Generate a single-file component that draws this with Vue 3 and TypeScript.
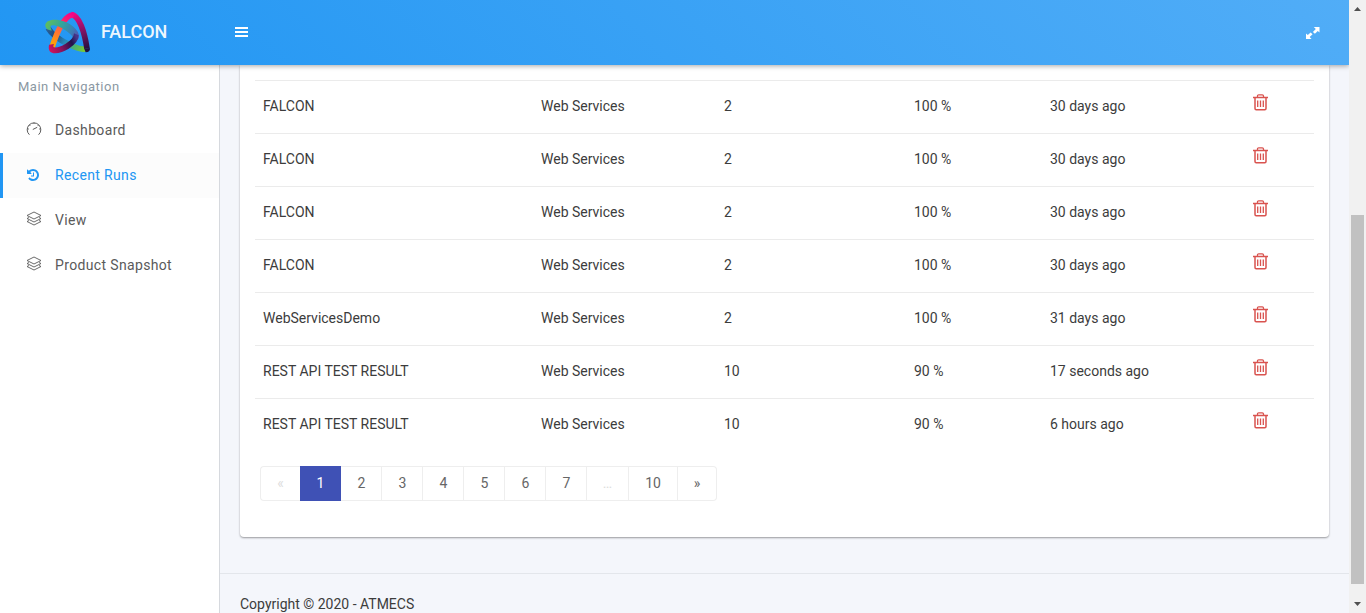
<script setup lang="ts">
interface Run {
  product: string
  type: string
  total: number
  rate: string
  when: string
}
interface Page {
  label: string
  kind?: 'active' | 'disabled'
  size: string
}

const falcon: Run = { product: 'FALCON', type: 'Web Services', total: 2, rate: '100 %', when: '30 days ago' }
const runs: Run[] = [
  { ...falcon },
  { ...falcon },
  { ...falcon },
  { ...falcon },
  { product: 'WebServicesDemo', type: 'Web Services', total: 2, rate: '100 %', when: '31 days ago' },
  { product: 'REST API TEST RESULT', type: 'Web Services', total: 10, rate: '90 %', when: '17 seconds ago' },
  { product: 'REST API TEST RESULT', type: 'Web Services', total: 10, rate: '90 %', when: '6 hours ago' },
]
const nav = [
  { label: 'Dashboard', icon: 'gauge' },
  { label: 'Recent Runs', icon: 'history', active: true },
  { label: 'View', icon: 'layers' },
  { label: 'Product Snapshot', icon: 'layers' },
]
const pages: Page[] = [
  { label: '«', kind: 'disabled', size: 'first' },
  { label: '1', kind: 'active', size: 'mid' },
  ...['2', '3', '4', '5', '6', '7'].map((label) => ({ label, size: 'mid' })),
  { label: '…', kind: 'disabled', size: 'dots' },
  { label: '10', size: 'wide' },
  { label: '»', size: 'last' },
]
</script>

<template>
  <div class="window">
    <div class="app">
      <header class="topbar">
        <div class="brand">
          <svg class="logo" viewBox="0 0 192 174" fill="none">
            <defs>
              <linearGradient id="warm" gradientUnits="userSpaceOnUse" x1="48" y1="125" x2="110" y2="28">
                <stop offset="0" stop-color="#ffa800" /><stop offset=".45" stop-color="#ff6a3d" />
                <stop offset=".75" stop-color="#fa1f6e" /><stop offset="1" stop-color="#f5008c" />
              </linearGradient>
              <linearGradient id="plum" gradientUnits="userSpaceOnUse" x1="115" y1="30" x2="155" y2="140">
                <stop offset="0" stop-color="#f0087f" /><stop offset=".5" stop-color="#7d1364" />
                <stop offset="1" stop-color="#1b1039" />
              </linearGradient>
              <linearGradient id="teal" gradientUnits="userSpaceOnUse" x1="32" y1="58" x2="128" y2="100">
                <stop offset="0" stop-color="#5fbd5d" /><stop offset=".4" stop-color="#32a69b" />
                <stop offset=".75" stop-color="#3a7fb5" /><stop offset="1" stop-color="#5750ac" />
              </linearGradient>
              <linearGradient id="leaf" gradientUnits="userSpaceOnUse" x1="34" y1="70" x2="148" y2="140">
                <stop offset="0" stop-color="#28639b" /><stop offset=".25" stop-color="#23487b" />
                <stop offset=".5" stop-color="#2689bc" /><stop offset=".72" stop-color="#45ae79" />
                <stop offset="1" stop-color="#7dcb2c" />
              </linearGradient>
              <linearGradient id="wine" gradientUnits="userSpaceOnUse" x1="42" y1="140" x2="124" y2="105">
                <stop offset="0" stop-color="#d3125c" /><stop offset=".4" stop-color="#85135d" />
                <stop offset=".78" stop-color="#21124b" /><stop offset="1" stop-color="#47368b" />
              </linearGradient>
            </defs>
            <path d="M36 72C48 92 73 109 98 121C121 133 138 138 151 134" stroke="url(#leaf)" stroke-width="17" />
            <path d="M106 32C130 34 146 86 153 134" stroke="url(#plum)" stroke-width="17" />
            <path d="M145 135L161.500 132Q164 144 149 145Z" fill="#20113d" />
            <path d="M48 130C62 86 86 30 113 33" stroke="url(#warm)" stroke-width="17" />
            <path d="M28 66C26 42 78 40 112 68Q132 84 128 102Q124 110 112 110Q114 98 98 86C74 66 48 60 44 66Q43 70 47 80Q30 78 28 66Z" fill="url(#teal)" />
            <path d="M39 122C32 160 74 148 98 134Q128 116 128 94L114 88Q114 104 88 120Q68 132 54 130Q50 129 54 120Z" fill="url(#wine)" />
          </svg>
          <span class="brand-name">FALCON</span>
        </div>
        <svg class="menu" viewBox="0 0 13 11"><path d="M0 0h13v2H0zM0 4h13v2H0zM0 8h13v2H0z" fill="#fff" /></svg>
        <svg class="expand" viewBox="0 0 14 12">
          <path d="M7.800 0H13.500V5.400L11.800 4L8.900 6.700L6.900 4.900L9.800 2.100ZM0 6.600L1.800 8L4.600 5.400L6.600 7.200L3.700 9.900L5.600 12H0Z" fill="#fff" />
        </svg>
      </header>

      <div class="body">
        <aside class="sidebar">
          <div class="nav-title">Main Navigation</div>
          <a v-for="item in nav" :key="item.label" class="nav-item" :class="{ active: item.active }">
            <svg v-if="item.icon === 'gauge'" class="nav-icon" viewBox="0 0 16 16" fill="none" stroke="currentColor">
              <path d="M3.400 13.700A6.800 6.800 0 1 1 12.600 13.700M6.800 8.500L11.200 6.300" />
              <path d="M8 1.500V3M1.500 8H3M13 8h1.500M3.400 4l1 1M12.600 4l-1 1" stroke-width=".8" />
            </svg>
            <svg v-else-if="item.icon === 'history'" class="nav-icon history" viewBox="0 128 1536 1536" fill="currentColor">
              <path d="M1536 896q0 156-61 298t-164 245-245 164-298 61q-172 0-327-72.500t-264-204.500q-7-10-6.500-22.500t8.500-20.500l137-138q10-9 25-9 16 2 23 12 73 95 179 147t225 52q104 0 198.500-40.500t163.500-109.500 109.500-163.500 40.500-198.500-40.500-198.500-109.500-163.500-163.500-109.500-198.500-40.500q-98 0-188 35.500t-160 101.500l137 138q31 30 14 69-17 40-59 40h-448q-26 0-45-19t-19-45v-448q0-42 40-59 39-17 69 14l130 129q107-101 244.500-156.500t284.500-55.500q156 0 298 61t245 164 164 245 61 298zm-640-288v448q0 14-9 23t-23 9h-320q-14 0-23-9t-9-23v-64q0-14 9-23t23-9h224v-352q0-14 9-23t23-9h64q14 0 23 9t9 23z" />
            </svg>
            <svg v-else class="nav-icon" viewBox="0 0 16 16" fill="none" stroke="currentColor" stroke-width=".9">
              <path d="M8 1L15 4.500L8 8L1 4.500ZM3 6.500L1 7.500L8 11L15 7.500L13 6.500M3 9.500L1 10.500L8 14L15 10.500L13 9.500" />
            </svg>
            <span>{{ item.label }}</span>
          </a>
        </aside>

        <main class="content">
          <section class="card">
            <table class="runs">
              <colgroup>
                <col class="c-product" /><col class="c-type" /><col class="c-total" />
                <col class="c-rate" /><col class="c-when" /><col />
              </colgroup>
              <tbody>
                <tr v-for="(run, i) in runs" :key="i">
                  <td>{{ run.product }}</td>
                  <td>{{ run.type }}</td>
                  <td>{{ run.total }}</td>
                  <td>{{ run.rate }}</td>
                  <td>{{ run.when }}</td>
                  <td>
                    <svg class="trash" viewBox="0 0 15 17" fill="none" stroke="#d9534f">
                      <path d="M0 3.500H15M4.500 3.500V2Q4.500 .8 5.700 .8H9.300Q10.500 .8 10.500 2V3.500" stroke-width="1.300" />
                      <path d="M2 3.500V14.500Q2 15.700 3.200 15.700H11.800Q13 15.700 13 14.500V3.500" stroke-width="1.500" />
                      <path d="M4.700 6.500V13M7.500 6.500V13M10.300 6.500V13" stroke-width="1.300" />
                    </svg>
                  </td>
                </tr>
              </tbody>
            </table>
            <nav class="pager">
              <a v-for="p in pages" :key="p.label" class="page" :class="[p.kind, p.size]">{{ p.label }}</a>
            </nav>
          </section>
          <footer class="footer">Copyright © 2020 - ATMECS</footer>
        </main>
      </div>
    </div>

    <div class="scrollbar">
      <svg class="arrow" viewBox="0 0 17 17"><path d="M5 11L8.500 7L12 11Z" fill="#505050" /></svg>
      <div class="thumb"></div>
      <svg class="arrow" viewBox="0 0 17 17"><path d="M5 6L8.500 10L12 6Z" fill="#505050" /></svg>
    </div>
  </div>
</template>

<style>
body {
  margin: 0;
  overflow: hidden;
}
</style>

<style scoped>
.window {
  display: flex;
  width: 1366px;
  height: 613px;
  overflow: hidden;
  font: 14px/20px Roboto, sans-serif;
  color: #3c3c3c;
  background: #f4f6fb;
}
.window * {
  box-sizing: border-box;
}
.app {
  flex: 1;
  display: flex;
  flex-direction: column;
  overflow: hidden;
}
.topbar {
  position: relative;
  z-index: 1;
  flex: none;
  display: flex;
  align-items: center;
  height: 65px;
  padding-right: 29px;
  background: linear-gradient(45deg, #2196f3, #51adf7);
  box-shadow: 0 1px 5px rgba(0, 0, 0, 0.35);
}
.brand {
  display: flex;
  align-items: center;
  width: 234px;
  padding-left: 36px;
}
.logo {
  width: 64px;
  height: 58px;
}
.brand-name {
  margin-left: 1px;
  padding-bottom: 2px;
  font-size: 18px;
  font-weight: 500;
  color: #fff;
  opacity: 0.92;
}
.menu {
  width: 13px;
  height: 11px;
  margin-left: 0.5px;
}
.expand {
  width: 14px;
  height: 12px;
  margin-left: auto;
}
.body {
  flex: 1;
  display: flex;
  min-height: 0;
}
.sidebar {
  flex: none;
  width: 220px;
  background: #fff;
  border-right: 1px solid #d6d9de;
}
.nav-title {
  height: 43px;
  padding: 12px 18px 0;
  font-size: 13px;
  line-height: 19px;
  letter-spacing: 0.5px;
  color: #8b98a3;
}
.nav-item {
  display: flex;
  align-items: center;
  height: 45px;
  padding: 0 0 2px 26px;
  letter-spacing: 0.35px;
  color: #5a5a5a;
}
.nav-item.active {
  padding-left: 24px;
  border-left: 3px solid #2196f3;
  background: #fcfcfc;
  color: #2196f3;
}
.nav-icon {
  width: 16px;
  height: 16px;
  margin: 0 13px 1px 0;
}
.nav-icon.history {
  width: 12px;
  height: 12px;
  margin: 0 16px 0 0;
}
.content {
  flex: 1;
  display: flex;
  flex-direction: column;
}
.card {
  flex: none;
  height: 472px;
  margin: 0 20px;
  padding: 15px 15px 0;
  background: #fff;
  border-radius: 0 0 4px 4px;
  box-shadow: 0 1px 2px rgba(0, 0, 0, 0.38);
}
.runs {
  width: 1059px;
  table-layout: fixed;
  border-spacing: 0;
}
.c-product {
  width: 278px;
}
.c-type {
  width: 183px;
}
.c-total {
  width: 190px;
}
.c-rate {
  width: 136px;
}
.c-when {
  width: 203px;
}
.runs td {
  height: 53px;
  padding: 0 8px 2px;
  border-top: 1px solid #ebebeb;
  white-space: nowrap;
}
.trash {
  display: block;
  width: 15px;
  height: 17px;
  margin-top: -7px;
}
.pager {
  display: flex;
  width: 457px;
  height: 35px;
  margin: 15px 0 0 5px;
}
.page {
  width: 41px;
  border: 1px solid #eee;
  border-left: 0;
  text-align: center;
  line-height: 33px;
  color: #666;
}
.page.mid {
  padding-left: 1px;
}
.page.first {
  width: 40px;
  border-left: 1px solid #eee;
  border-right: 0;
  border-radius: 4px 0 0 4px;
}
.page.last {
  width: 39px;
  border-radius: 0 4px 4px 0;
}
.page.dots {
  width: 42px;
}
.page.wide {
  width: 49px;
}
.page.disabled {
  color: #ddd;
}
.page.active {
  border-color: #3f51b5;
  background: #3f51b5;
  color: #fff;
}
.footer {
  flex: none;
  margin-top: 36px;
  padding: 20px;
  border-top: 1px solid #e3e6eb;
}
.scrollbar {
  flex: none;
  display: flex;
  flex-direction: column;
  align-items: center;
  width: 17px;
  background: #f1f1f1;
}
.arrow {
  width: 17px;
  height: 17px;
}
.thumb {
  width: 13px;
  height: 369px;
  margin: 198px 0 12px;
  background: #c1c1c1;
}
</style>
